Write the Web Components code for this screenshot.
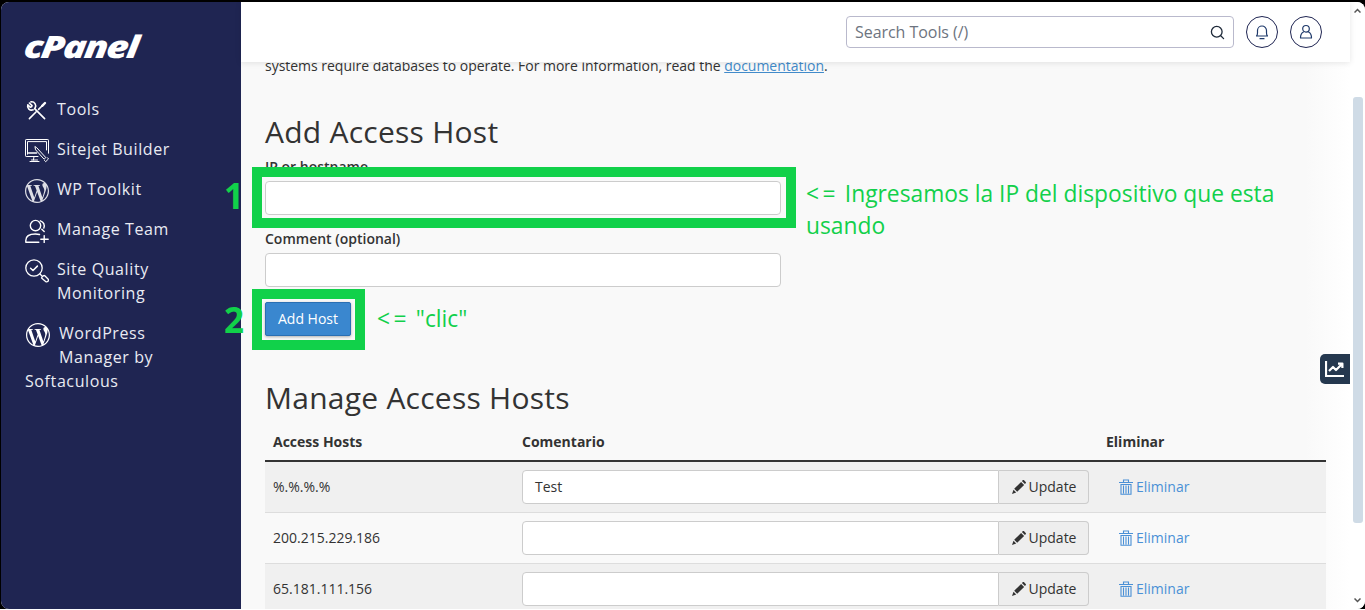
<!DOCTYPE html>
<html lang="es">
<head>
<meta charset="utf-8">
<title>Remote Database Access</title>
<style>
  html, body { margin: 0; height: 100%; overflow: hidden; }
  body { background: linear-gradient(#000 0 609px, #fff 609px); font-family: "Open Sans", "Liberation Sans", sans-serif; }
</style>
</head>
<body>
<cp-app>
  <cp-sidebar slot="side">
    <cp-nav-item label="Tools" icon="tools"></cp-nav-item>
    <cp-nav-item label="Sitejet Builder" icon="sitejet"></cp-nav-item>
    <cp-nav-item label="WP Toolkit" icon="wp" dim></cp-nav-item>
    <cp-nav-item label="Manage Team" icon="team"></cp-nav-item>
    <cp-nav-item label="Site Quality Monitoring" icon="quality" tall></cp-nav-item>
    <cp-nav-item label="WordPress Manager by Softaculous" icon="wp" tall wide></cp-nav-item>
  </cp-sidebar>
  <cp-topbar slot="top"></cp-topbar>
  <cp-page slot="page">
    <cp-host-form></cp-host-form>
    <cp-host-table>
      <cp-host-row host="%.%.%.%" comment="Test"></cp-host-row>
      <cp-host-row host="200.215.229.186"></cp-host-row>
      <cp-host-row host="65.181.111.156"></cp-host-row>
    </cp-host-table>
  </cp-page>
</cp-app>

<script>
const WP_PATH = 'M21.469 6.825c.84 1.537 1.318 3.3 1.318 5.175 0 3.979-2.156 7.456-5.363 9.325l3.295-9.527c.615-1.54.82-2.771.82-3.864 0-.405-.026-.78-.07-1.109m-7.981.105c.647-.03 1.232-.105 1.232-.105.582-.075.514-.93-.067-.899 0 0-1.755.135-2.88.135-1.064 0-2.85-.15-2.85-.15-.585-.03-.661.855-.075.885 0 0 .54.061 1.125.09l1.68 4.605-2.37 7.08L5.354 6.9c.649-.03 1.234-.1 1.234-.1.585-.075.516-.93-.065-.896 0 0-1.746.138-2.874.138-.2 0-.438-.008-.69-.015C4.911 3.15 8.235 1.215 12 1.215c2.809 0 5.365 1.072 7.286 2.833-.046-.003-.091-.009-.141-.009-1.06 0-1.812.923-1.812 1.914 0 .89.513 1.643 1.06 2.531.411.72.89 1.643.89 2.977 0 .915-.354 1.994-.821 3.479l-1.075 3.585-3.9-11.61.001.014zM12 22.784c-1.059 0-2.081-.153-3.048-.437l3.237-9.406 3.315 9.087c.024.053.05.101.078.149-1.12.393-2.325.609-3.582.609M1.211 12c0-1.564.336-3.05.935-4.39L7.29 21.709C3.694 19.96 1.212 16.271 1.211 12M12 0C5.385 0 0 5.385 0 12s5.385 12 12 12 12-5.385 12-12S18.615 0 12 0';

const NAV_ICONS = {
  tools: `<svg viewBox="-3 -3 30 30" fill="none" stroke="#fff" stroke-width="2" stroke-linecap="round" stroke-linejoin="round">
    <path d="M9 9l12.500 12.500"/>
    <path d="M2.500 2l3.300 3.300-.7 1.500-1.500.5L.5 4.300A5 5 0 0 0 7.200 10.500M9.600 8.200A5 5 0 0 0 4.500.6"/>
    <path d="M2.500 21.500l8.500-8.500M14 10l4.500-4.500"/>
    <path d="M18.500 5.500l3.500-3.500" stroke-width="3"/></svg>`,
  sitejet: `<svg viewBox="0 0 24 24" fill="none" stroke="#fff" stroke-width="1" stroke-linecap="round" stroke-linejoin="round">
    <path d="M13 17.500H1.200a.7.7 0 0 1-.7-.7V1.200A.7.7 0 0 1 1.200.5h21.600a.7.7 0 0 1 .7.7v13"/>
    <path d="M2.500 15.200V2.600h19V11"/><path d="M9 17.600l-.6 3.400M5 22.500h9M6.500 21h6"/>
    <path d="M12 9l8.800 9.600-1.700 1.600-8.500-9.400-.6-2.900zM22.400 18.700l1.100 1.200-2.800 2.800-1.200-1.200"/>
    <path d="M3.500 14h8" stroke-width="1.600"/></svg>`,
  wp: `<svg viewBox="0 0 24 24" fill="#fff"><path d="${WP_PATH}"/></svg>`,
  team: `<svg viewBox="0 0 24 24" fill="none" stroke="#fff" stroke-width="1.400" stroke-linecap="round" stroke-linejoin="round">
    <circle cx="10.500" cy="6.600" r="5.200"/><path d="M15.400 1.800a5.300 5.300 0 0 1 3.400 7.300M16.800 10.200l2.400 2.400"/>
    <path d="M.8 23.200v-1.800c0-4 3.400-6.400 9.600-6.400 1.600 0 2.900.2 4.100.5M.8 23.200h13"/><path d="M19.200 16.600v7M15.800 20.200h7.400"/></svg>`,
  quality: `<svg viewBox="0 0 24 24" fill="none" stroke="#fff" stroke-width="1.300" stroke-linecap="round" stroke-linejoin="round">
    <circle cx="9" cy="9" r="8.200"/><path d="M5.600 9.200l2.400 2.300 4.400-4.400" stroke-width="1.500"/>
    <path d="M15 15l2 2M16.800 18.400l1.600-1.600a1 1 0 0 1 1.400 0l3.200 3.200a1.700 1.700 0 0 1-2.400 2.400l-3.800-3.200a.6.6 0 0 1 0-.8z"/></svg>`
};

function shadow(host, html) {
  host.attachShadow({ mode: 'open' }).innerHTML = html;
}

// outer window: sidebar, then main column, then the scrollbar
class CpApp extends HTMLElement {
  constructor() {
    super();
    shadow(this, `<style>
      :host { display: flex; position: absolute; inset: 2px 0 1px 1px; background: #fff; border-radius: 8px; overflow: hidden; }
      .side { flex: 0 0 240px; display: flex; }
      .main { flex: 1; min-width: 0; display: flex; flex-direction: column; position: relative; }
      .bar { flex: 0 0 15px; background: #fff; position: relative; display: flex; flex-direction: column; align-items: center; }
      .thumb { width: 10px; height: 426px; margin-top: 95px; border-radius: 3px; background: #cfdbe6; }
      .arrow { position: absolute; left: 4px; width: 7px; height: 5px; }
      .tab { position: absolute; right: 0; top: 352px; width: 30px; height: 30px; background: #25384f; border-radius: 5px 0 0 5px; display: flex; align-items: center; justify-content: center; z-index: 3; }
      .tab svg { width: 20px; height: 18px; }
    </style>
    <div class="side"><slot name="side"></slot></div>
    <div class="main">
      <slot name="top"></slot>
      <slot name="page"></slot>
      <div class="tab"><svg viewBox="0 0 20 18" fill="none" stroke="#fff" stroke-width="2.200"><path d="M1 1v15h18"/><path d="M4 11l4-4 3 3 6-6M13 3.600h4.400V8" stroke-linejoin="round"/></svg></div>
    </div>
    <div class="bar">
      <svg class="arrow" style="top:6px" viewBox="0 0 7 5" fill="none" stroke="#555" stroke-width="1.500"><path d="M.5 4.500l3-3 3 3"/></svg>
      <div class="thumb"></div>
      <svg class="arrow" style="bottom:6px" viewBox="0 0 7 5" fill="none" stroke="#555" stroke-width="1.500"><path d="M.5.5l3 3 3-3"/></svg>
    </div>`);
  }
}

class CpSidebar extends HTMLElement {
  constructor() {
    super();
    shadow(this, `<style>
      :host { display: block; width: 240px; background: #1f2552; color: #e9ebf2; box-sizing: border-box; padding: 0 30px 0 24px; }
      .logo { font: italic 800 31px/34px "Open Sans", sans-serif; color: #fff; letter-spacing: -1.600px; height: 34px; margin: 27px 0 26px -3px; transform: scaleX(1.240) skewX(-6deg); transform-origin: left bottom; white-space: nowrap; }
    </style>
    <div class="logo">cPanel</div>
    <slot></slot>`);
  }
}

class CpNavItem extends HTMLElement {
  constructor() {
    super();
    const wide = this.hasAttribute('wide');
    const tall = this.hasAttribute('tall');
    shadow(this, `<style>
      :host { display: block; padding: 8px 0; font-size: 16px; line-height: 24px; letter-spacing: .6px; }
      :host([dim]) svg { opacity: .85; }
      .ic { float: left; width: 24px; height: ${tall ? 48 : 24}px; margin-right: ${wide ? 9 : 8}px; padding-left: ${wide ? 1 : 0}px; }
      .ic svg { display: block; width: 24px; height: 24px; margin-top: 2px; }
    </style>
    <span class="ic">${NAV_ICONS[this.getAttribute('icon')]}</span>${this.getAttribute('label')}`);
  }
}

class CpTopbar extends HTMLElement {
  constructor() {
    super();
    shadow(this, `<style>
      :host { display: flex; flex: none; align-items: center; justify-content: flex-end; gap: 12px; height: 60px; padding: 0 28px 0 0; background: #fff; box-shadow: 0 1px 6px rgba(0,0,0,.1); position: relative; z-index: 2; }
      .search { box-sizing: border-box; width: 388px; height: 32px; border: 1px solid #b9b9cc; border-radius: 4px; display: flex; align-items: center; justify-content: space-between; padding: 0 8px 0 8px; font-size: 16px; color: #6d7480; letter-spacing: -.05px; }
      .search svg { width: 15px; height: 15px; }
      .round { box-sizing: border-box; width: 32px; height: 32px; border: 1px solid #1f2552; border-radius: 50%; display: flex; align-items: center; justify-content: center; }
      .round svg { width: 16px; height: 16px; }
    </style>
    <div class="search">Search Tools (/)
      <svg viewBox="0 0 16 16" fill="none" stroke="#1f2a3a" stroke-width="1.400" stroke-linecap="round"><circle cx="7.200" cy="7.200" r="5.700"/><path d="M11.500 11.500l3 3"/></svg>
    </div>
    <div class="round"><svg viewBox="0 0 16 16" fill="none" stroke="#1f3a6b" stroke-width="1.200" stroke-linecap="round" stroke-linejoin="round"><path d="M2.500 12h11c-.8-.7-1-1.500-1-3V6.500a4.500 4.500 0 0 0-9 0V9c0 1.500-.2 2.300-1 3z"/><path d="M6 14.700h4"/></svg></div>
    <div class="round"><svg viewBox="0 0 16 16" fill="none" stroke="#1f3a6b" stroke-width="1.200" stroke-linecap="round" stroke-linejoin="round"><circle cx="8" cy="4.800" r="3.300"/><path d="M5.400 8C3.500 9 2.500 10.500 2.500 14h11c0-3.500-1-5-2.900-6"/></svg></div>`);
  }
}

class CpPage extends HTMLElement {
  constructor() {
    super();
    shadow(this, `<style>
      :host { display: block; margin-top: -8px; padding: 2px 24px 0 24px; background: linear-gradient(to right, #f9f9f9 96%, #fff); flex: 1 0 auto; font-size: 14px; line-height: 20px; color: #333; }
      p { margin: 0; letter-spacing: -.02px; }
      a { color: #428bca; }
    </style>
    <p>systems require databases to operate. For more information, read the <a href="#">documentation</a>.</p>
    <slot></slot>`);
  }
}

class CpHostForm extends HTMLElement {
  constructor() {
    super();
    shadow(this, `<style>
      :host { display: block; position: relative; width: 516px; }
      h2 { font-size: 30px; line-height: 33px; font-weight: 400; letter-spacing: .25px; margin: 39px 0 9px; }
      label { display: block; font-weight: 600; margin-bottom: 4px; }
      .in { box-sizing: border-box; display: block; width: 516px; height: 34px; background: #fff; border: 1px solid #ccc; border-radius: 4px; margin-bottom: 14px; }
      .btn { display: inline-block; box-sizing: border-box; margin-top: 1px; height: 34px; padding: 6px 12px; background: #3a87cf; border: 1px solid #2a6fb3; border-radius: 2px; color: #fff; box-shadow: 0 1px 3px rgba(0,0,0,.3); }
      .box { position: absolute; box-sizing: border-box; border: 10px solid #11d14a; }
      .num { position: absolute; font-size: 35px; line-height: 40px; font-weight: 700; color: #11d14a; }
      .note { position: absolute; font-size: 22.800px; line-height: 32px; color: #12d04b; white-space: nowrap; }
      .note b { font-weight: 400; letter-spacing: 3.400px; }
    </style>
    <h2>Add Access Host</h2>
    <label>IP or hostname</label>
    <div class="in"></div>
    <label>Comment (optional)</label>
    <div class="in"></div>
    <div class="btn">Add Host</div>
    <div class="box" style="left:-13px;top:52px;width:544px;height:61px"></div>
    <div class="box" style="left:-13px;top:174px;width:113px;height:61px"></div>
    <div class="num" style="left:-41px;top:61px">1</div>
    <div class="num" style="left:-41px;top:185px">2</div>
    <div class="note" style="left:541px;top:63px"><b>&lt;=</b> Ingresamos la IP del dispositivo que esta<br>usando</div>
    <div class="note" style="left:112px;top:188px"><b>&lt;=</b> "clic"</div>`);
  }
}

class CpHostTable extends HTMLElement {
  constructor() {
    super();
    shadow(this, `<style>
      :host { display: block; width: 1061px; }
      h2 { font-size: 30px; line-height: 33px; font-weight: 400; letter-spacing: .25px; margin: 45px 0 9px; }
      .head { display: grid; grid-template-columns: 249px 584px 1fr; padding: 9px 8px 8px; font-weight: 700; border-bottom: 2px solid #333; height: 20px; }
    </style>
    <h2>Manage Access Hosts</h2>
    <div class="head"><span>Access Hosts</span><span>Comentario</span><span>Eliminar</span></div>
    <slot></slot>`);
  }
}

class CpHostRow extends HTMLElement {
  constructor() {
    super();
    const host = this.getAttribute('host');
    const comment = this.getAttribute('comment') || '';
    shadow(this, `<style>
      :host { display: grid; grid-template-columns: 249px 567px 1fr; align-items: center; height: 50px; padding: 0 8px; border-bottom: 1px solid #ddd; background: #f9f9f9; }
      :host(:nth-child(odd)) { background: #f0f0f0; }
      .group { display: flex; height: 34px; }
      .val { box-sizing: border-box; flex: 1; background: #fff; border: 1px solid #ccc; border-radius: 4px 0 0 4px; padding: 6px 12px; }
      .up { box-sizing: border-box; width: 90px; border: 1px solid #ccc; border-left: 0; border-radius: 0 4px 4px 0; background: #eee; display: flex; align-items: center; justify-content: center; gap: 3px; }
      .up svg { width: 15px; height: 15px; }
      .del { color: #4a90d6; padding-left: 30px; display: flex; align-items: center; gap: 3px; }
      .del svg { width: 14px; height: 16px; }
    </style>
    <span>${host}</span>
    <div class="group"><div class="val">${comment}</div><div class="up">
      <svg viewBox="0 0 15 15" fill="#333"><path d="M3.200 8.800l6.900-6.900 3 3-6.900 6.900zM2.500 9.800l2.700 2.700-4.200 1.500zM10.900 1.100l.8-.8c.4-.4 1-.4 1.400 0l1.600 1.600c.4.400.4 1 0 1.400l-.8.8z"/></svg>Update</div></div>
    <span class="del"><svg viewBox="0 0 14 16" fill="none" stroke="#4a90d6" stroke-width="1.100"><path d="M0 3.500h14M4.500 3V1h5v2M2 5.500h10v9.700H2zM4.500 6.500v8M7 6.500v8M9.500 6.500v8"/></svg>Eliminar</span>`);
  }
}

customElements.define('cp-app', CpApp);
customElements.define('cp-sidebar', CpSidebar);
customElements.define('cp-nav-item', CpNavItem);
customElements.define('cp-topbar', CpTopbar);
customElements.define('cp-page', CpPage);
customElements.define('cp-host-form', CpHostForm);
customElements.define('cp-host-table', CpHostTable);
customElements.define('cp-host-row', CpHostRow);
</script>
</body>
</html>
